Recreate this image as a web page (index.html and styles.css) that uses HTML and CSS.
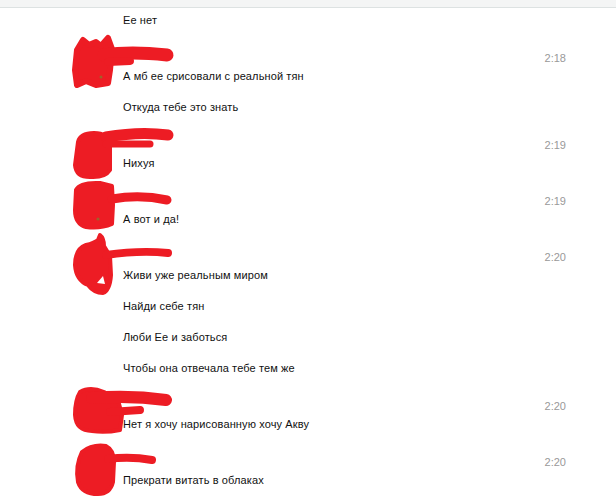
FILE: index.html
```html
<!DOCTYPE html>
<html lang="ru">
<head>
<meta charset="utf-8">
<link rel="stylesheet" href="styles.css">
</head>
<body>
<div class="topbar"></div>
<div class="chat">
  <div class="group cont">
    <div class="msg">Ее нет</div>
  </div>

  <div class="group">
    <svg class="scrib" width="200" height="90" viewBox="0 0 200 90">
      <g transform="translate(0,-31)" fill="#ed1c24" stroke="#ed1c24" stroke-linejoin="round" stroke-linecap="round">
        <path stroke-width="6" d="M77,50 L83,40 L89,45 L96,42 L101,46 L108,38 L112,49 L110,70 L108,83 L96,85 L86,81 L77,85 L75,70 Z"/>
        <path fill="none" stroke-width="13" d="M104,55 Q130,51 167,55"/>
        <path fill="none" stroke-width="8" d="M108,62 L130,61"/>
        <circle cx="101" cy="77" r="1.5" fill="#a0602a" stroke="none"/>
      </g>
    </svg>
    <div class="head"><span class="time">2:18</span></div>
    <div class="msg">А мб ее срисовали с реальной тян</div>
    <div class="msg">Откуда тебе это знать</div>
  </div>

  <div class="group">
    <svg class="scrib" width="200" height="90" viewBox="0 0 200 90">
      <g transform="translate(0,-118)" fill="#ed1c24" stroke="#ed1c24" stroke-linejoin="round" stroke-linecap="round">
        <path stroke-width="4" d="M78,142 Q80,133 94,133 Q108,133 110,145 L110,170 Q105,178 90,177 Q76,177 75,165 Z"/>
        <path fill="none" stroke-width="11" d="M106,137 Q140,131 168,135"/>
        <path fill="none" stroke-width="7" d="M106,144 L150,144"/>
      </g>
    </svg>
    <div class="head"><span class="time">2:19</span></div>
    <div class="msg">Нихуя</div>
  </div>

  <div class="group">
    <svg class="scrib" width="200" height="90" viewBox="0 0 200 90">
      <g transform="translate(0,-174)" fill="#ed1c24" stroke="#ed1c24" stroke-linejoin="round" stroke-linecap="round">
        <path stroke-width="4" d="M76,190 Q80,182 100,183 L112,186 L113,205 L112,224 Q100,229 86,227 Q75,224 75,210 Z"/>
        <path fill="none" stroke-width="9" d="M112,199 Q140,194 167,200"/>
        <circle cx="98" cy="219" r="1.6" fill="#a0602a" stroke="none"/>
      </g>
    </svg>
    <div class="head"><span class="time">2:19</span></div>
    <div class="msg">А вот и да!</div>
  </div>

  <div class="group">
    <svg class="scrib" width="200" height="110" viewBox="0 0 200 110">
      <g transform="translate(0,-230)" fill="#ed1c24" stroke="#ed1c24" stroke-linejoin="round" stroke-linecap="round">
        <path stroke-width="4" d="M100,235 Q104,238 104,246 L110,256 L111,275 Q110,290 103,293 Q94,293 88,285 Q76,280 75,265 Q75,249 86,245 Q94,243 98,240 Z"/>
        <path fill="none" stroke-width="8" d="M106,255 Q140,250 168,253"/>
        <path fill="#fff" stroke="none" d="M97,283 L103,276 L105,284 Z"/>
      </g>
    </svg>
    <div class="head"><span class="time">2:20</span></div>
    <div class="msg">Живи уже реальным миром</div>
    <div class="msg">Найди себе тян</div>
    <div class="msg">Люби Ее и заботься</div>
    <div class="msg">Чтобы она отвечала тебе тем же</div>
  </div>

  <div class="group">
    <svg class="scrib" width="200" height="90" viewBox="0 0 200 90">
      <g transform="translate(0,-379)" fill="#ed1c24" stroke="#ed1c24" stroke-linejoin="round" stroke-linecap="round">
        <path stroke-width="4" d="M80,392 Q90,386 104,392 L118,400 L122,415 L120,430 Q105,433 92,431 Q76,431 75,415 Q75,400 80,392 Z"/>
        <path fill="none" stroke-width="12" d="M92,398 Q130,395 166,400"/>
        <path fill="none" stroke-width="8" d="M110,412 L140,410"/>
      </g>
    </svg>
    <div class="head"><span class="time">2:20</span></div>
    <div class="msg">Нет я хочу нарисованную хочу Акву</div>
  </div>

  <div class="group">
    <svg class="scrib" width="200" height="90" viewBox="0 0 200 90">
      <g transform="translate(0,-435)" fill="#ed1c24" stroke="#ed1c24" stroke-linejoin="round" stroke-linecap="round">
        <path stroke-width="4" d="M82,452 Q92,444 106,446 Q114,450 114,462 L113,482 Q110,494 98,494 Q82,494 78,482 Q75,466 82,452 Z"/>
        <path fill="none" stroke-width="8" d="M108,459 Q130,456 152,460"/>
      </g>
    </svg>
    <div class="head"><span class="time">2:20</span></div>
    <div class="msg">Прекрати витать в облаках</div>
  </div>
</div>
</body>
</html>
```

FILE: styles.css
```css
html, body {
  margin: 0;
  padding: 0;
  background: #fff;
}
body {
  font-family: "Liberation Sans", sans-serif;
  font-size: 11px;
  color: #000;
  width: 616px;
  height: 504px;
  overflow: hidden;
}
.topbar {
  height: 7px;
  background: #f4f5f5;
  border-bottom: 1px solid #dde2e2;
}
.chat {
  padding-top: 5px;
  display: flex;
  flex-direction: column;
  gap: 24px;
}
.group {
  position: relative;
  display: flex;
  flex-direction: column;
  gap: 17px;
  padding-left: 123px;
  padding-right: 50px;
}
.head {
  height: 14px;
  line-height: 14px;
  display: flex;
  justify-content: flex-end;
  margin-bottom: -13px;
}
.time {
  color: #999;
  font-family: "Liberation Sans", sans-serif;
  font-size: 11px;
}
.msg {
  height: 14px;
  line-height: 14px;
  font-family: "Liberation Sans", sans-serif;
  font-size: 11px;
  letter-spacing: 0.12px;
  color: #111;
  white-space: nowrap;
}
.scrib {
  position: absolute;
  left: 0;
  top: -20px;
  pointer-events: none;
}
```
